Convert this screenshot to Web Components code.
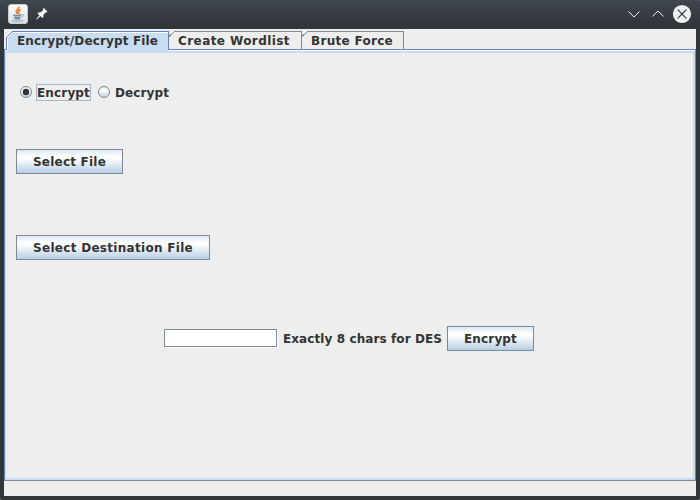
<!DOCTYPE html>
<html lang="en"><head><meta charset="utf-8"><title>Encrypt/Decrypt File</title>
<style>html,body{margin:0;width:700px;height:500px;overflow:hidden;background:#6b7074}</style></head>
<body>
<app-window>
  <title-bar slot="title"></title-bar>
  <tab-pane>
    <metal-tab slot="tabs" selected style="--w:163px"><text-label w="141">Encrypt/Decrypt File</text-label></metal-tab>
    <metal-tab slot="tabs" style="--w:133px"><text-label w="112">Create Wordlist</text-label></metal-tab>
    <metal-tab slot="tabs" style="--w:102px"><text-label w="82">Brute Force</text-label></metal-tab>
    <encrypt-form></encrypt-form>
  </tab-pane>
</app-window>
<script>
const define = (name, html, ready) => customElements.define(name, class extends HTMLElement {
  constructor() {
    super();
    this.attachShadow({mode: 'open'}).innerHTML = html;
  }
  connectedCallback() { if (ready) ready(this); }
});

define('text-label', `<style>
:host{display:block;flex:none;font:bold 12px/14px "DejaVu Sans",sans-serif;color:#333;white-space:nowrap}
span{display:inline-block}
</style><span><slot></slot></span>`, el => {
  const span = el.shadowRoot.querySelector('span');
  const target = +el.getAttribute('w');
  const gap = (target - span.getBoundingClientRect().width) / el.textContent.length;
  span.style.letterSpacing = gap.toFixed(3) + 'px';
  el.style.width = target + 'px';
});

define('title-bar', `<style>
:host{display:flex;box-sizing:border-box;height:29px;padding:4px 8px 0 8px;background:linear-gradient(#40474e,#31363b 80%)}
svg{display:block;flex:none}.pin{margin:2px 0 0 6px}.space{flex:1}.b{margin-left:4px}
</style>
<svg width="20" height="20" viewBox="0 0 20 20"><defs><linearGradient id="g" x2="0" y2="1"><stop stop-color="#fff"/><stop offset="1" stop-color="#d9dcdd"/></linearGradient></defs>
<rect x=".5" y=".5" width="19" height="19" rx="2.5" fill="url(#g)" stroke="#c8cbcd"/>
<path d="M10.8 2.6C11.8 5.2 7.6 5.6 8.3 8Q8.6 9.2 9.6 10.2M12.6 5.6C10 6.7 9.6 7.5 10.7 8.6Q11.2 9.4 10.3 10.2" fill="none" stroke="#f08838" stroke-width="1.7"/>
<path d="M5.3 11Q9 12.2 13 11M6 12.8Q9.5 14 12.5 12.8M6.7 14.5Q9.3 15.5 12 14.5" fill="none" stroke="#6d8fa8" stroke-width="1.4"/>
<path d="M13.2 10.6C16.3 9.8 15.8 12.4 13.3 13.2M4.2 16C3.5 17.6 13 18 15.3 16" fill="none" stroke="#8aa5b8" stroke-width="1"/></svg>
<svg class="pin" width="16" height="16" viewBox="0 0 16 16"><path d="M9.8 2L13.4 5.6L12.4 6.6L11.7 6.4L9.4 8.8L9.3 11.3L8.5 12L6.4 10L2.9 13.5L2.3 12.9L5.4 9.2L3.6 7.4L4.4 6.5L6.8 6.3L9.2 4L8.9 3Z" fill="#fcfcfc"/></svg>
<div class="space"></div>
<svg class="b" width="20" height="20" viewBox="0 0 20 20"><path d="M4.5 7.5L10 13L15.5 7.5" fill="none" stroke="#eff0f1"/></svg>
<svg class="b" width="20" height="20" viewBox="0 0 20 20"><path d="M4.5 12.5L10 7L15.5 12.5" fill="none" stroke="#eff0f1"/></svg>
<svg class="b" width="20" height="20" viewBox="0 0 20 20"><circle cx="10" cy="10" r="9.1" fill="#eff0f1"/><path d="M5.7 5.7L14.3 14.3M14.3 5.7L5.7 14.3" stroke="#31363b" stroke-width="1.2"/></svg>`);

define('app-window', `<style>
:host{display:flex;flex-direction:column;width:700px;height:500px;background:#31363b;border-radius:3px;overflow:hidden}
.body{flex:1;display:flex;margin:0 4px 4px;background:#eee}
::slotted(tab-pane){flex:1}
</style><slot name="title"></slot><div class="body"><slot></slot></div>`);

define('tab-pane', `<style>
:host{display:flex;flex-direction:column;padding:2px 0 15px}
.tabs{display:flex;height:19px;padding-left:2px;margin-bottom:-1px}
.frame{flex:1;display:flex;padding-top:1px;border:1px solid #6382bf;border-bottom-color:#7a8a99;background:#fff}
.inner{flex:1;border:2px solid #c8ddf2;border-left-width:1px;background:#eee}
</style><div class="tabs"><slot name="tabs"></slot></div><div class="frame"><div class="inner"><slot></slot></div></div>`);

define('metal-tab', `<style>
:host{display:grid;box-sizing:border-box;width:var(--w);height:18px;flex:none}
:host([selected]){height:22px;z-index:1}
svg,.t{grid-area:1/1;display:block}
.t{padding:3px 0 0 9px}:host([selected]) .t{padding-left:11px}
</style><svg shape-rendering="crispEdges"></svg><div class="t"><slot></slot></div>`, el => {
  const w = parseInt(el.style.getPropertyValue('--w'));
  const svg = el.shadowRoot.querySelector('svg');
  const on = el.hasAttribute('selected');
  svg.setAttribute('width', w);
  svg.setAttribute('height', on ? 22 : 18);
  svg.innerHTML = on
    ? `<path d="M1 22V6L6 0H${w}V19H${w - 1}V22Z" fill="#c8ddf2"/><path d="M1.5 19V6.5L6.5 1.5H${w - 1}" fill="none" stroke="#fff"/><path d="M.5 19V6.5L6.5 .5H${w - .5}V19" fill="none" stroke="#6382bf"/>`
    : `<path d="M0 5.5L5.5 .5H${w - .5}V18" fill="none" stroke="#7a8a99"/>`;
});

define('metal-button', `<style>
:host{display:flex;box-sizing:border-box;flex:none;width:max-content;height:25px;padding:5px 16px 0;border:1px solid #7a8a99;background:linear-gradient(#dde8f3,#fff 30%,#fff 36%,#b8cfe5)}
</style><slot></slot>`);

define('radio-option', `<style>
:host{display:flex;align-items:flex-start;height:17px;gap:4px}
svg{display:block;margin-top:2px}div{box-sizing:border-box;width:55px;height:17px;padding:1px 0 0;border:1px solid transparent}
:host([checked]) div{border-color:#a3b8cc}
circle:last-child{display:none}:host([checked]) circle:last-child{display:block}
</style><svg width="12" height="12"><defs><linearGradient id="r" x2="0" y2="1"><stop stop-color="#dde8f3"/><stop offset=".35" stop-color="#fff"/><stop offset="1" stop-color="#b8cfe5"/></linearGradient></defs><circle cx="6" cy="6" r="5.5" fill="url(#r)" stroke="#7a8a99"/><circle cx="6" cy="6" r="3.2" fill="#333"/></svg><div><slot></slot></div>`);

define('encrypt-form', `<style>
:host{display:block;padding:31px 0 0 10px}
.radios{display:flex;padding-left:4px;gap:7px}
.one{margin-top:48px}.two{margin-top:61px}
.row{display:flex;align-items:flex-start;margin:66px 0 0 148px}
input{box-sizing:border-box;width:113px;height:18px;margin:3px 6px 0 0;padding:0 2px;border:1px solid #7a8a99;border-radius:0;outline:0;background:#fff;box-shadow:1px 1px #fff;font:12px "DejaVu Sans",sans-serif}
.row>text-label{margin-top:6px}.row metal-button{margin-left:5px}
</style>
<div class="radios"><radio-option checked><text-label w="53">Encrypt</text-label></radio-option><radio-option><text-label w="54">Decrypt</text-label></radio-option></div>
<metal-button class="one"><text-label w="73">Select File</text-label></metal-button>
<metal-button class="two"><text-label w="160">Select Destination File</text-label></metal-button>
<div class="row"><input type="text" aria-label="Key"><text-label w="159">Exactly 8 chars for DES</text-label><metal-button><text-label w="53">Encrypt</text-label></metal-button></div>`);
</script>
</body></html>
